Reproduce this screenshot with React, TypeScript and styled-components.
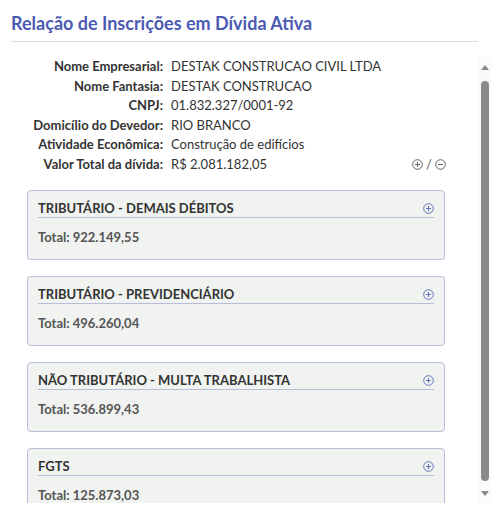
import React, { FC } from "react";
import styled, { createGlobalStyle } from "styled-components";

const GlobalStyle = createGlobalStyle`
  body {
    margin: 0;
    background: #ffffff;
    font-family: "Lato", "Noto Sans", sans-serif;
    color: #333333;
  }
`;

const Page = styled.div`
  padding: 0 0 0 11px;
`;

const Title = styled.h2`
  margin: 0 13px 0 0;
  padding: 12px 0 7px;
  font-size: 18px;
  line-height: 22px;
  font-weight: 700;
  color: #4b5ab3;
  border-bottom: 1px solid #dcdee6;
`;

const Body = styled.div`
  display: flex;
  height: 446px;
  margin-top: 15px;
`;

const ScrollContent = styled.div`
  flex: 1;
  min-width: 0;
  overflow-y: auto;
  scrollbar-width: none;
`;

const ScrollBar = styled.div`
  display: flex;
  flex-direction: column;
  width: 13px;
  background: #fafafa;
`;

interface IArrowProps {
  dir: "up" | "down";
}
const ArrowButton = styled.div<IArrowProps>`
  display: flex;
  align-items: center;
  justify-content: center;
  height: 20px;

  &::before {
    content: "";
    border-left: 4px solid transparent;
    border-right: 4px solid transparent;
    ${({ dir }): string =>
      dir === "up" ? "border-bottom: 5px solid #8a8a8a;" : "border-top: 5px solid #8a8a8a;"}
  }
`;

const Thumb = styled.div`
  flex: 1;
  margin: 4px 2px 2px 3px;
  border-radius: 5px;
  background: #8a8a8a;
`;

const InfoGrid = styled.div`
  display: grid;
  grid-template-columns: 152px 1fr auto;
  column-gap: 8px;
  padding-right: 32px;
  font-size: 13px;
  line-height: 19.5px;
`;

const Label = styled.span`
  text-align: right;
  font-weight: 700;
  color: #333333;
`;

const Value = styled.span`
  color: #333333;
`;

const Toggles = styled.span`
  display: flex;
  align-items: center;
  gap: 3px;
  color: #555555;
`;

const CardList = styled.div`
  display: flex;
  flex-direction: column;
  gap: 16px;
  margin: 16px 33px 16px 16px;
`;

const Card = styled.div`
  padding: 0 10px 13px;
  border: 1px solid #b8bdd9;
  border-radius: 4px;
  background: #f0f3f0;
`;

const CardHeader = styled.div`
  display: flex;
  align-items: center;
  justify-content: space-between;
  padding-top: 8px;
  border-bottom: 1px solid #b8bdd9;
  font-size: 13px;
  line-height: 18px;
  font-weight: 700;
  color: #333333;
`;

const CardTotal = styled.div`
  margin-top: 10px;
  font-size: 13px;
  line-height: 18px;
  font-weight: 700;
  color: #555555;
`;

interface ICircleProps {
  sign: "plus" | "minus";
  color?: string;
}
const CircleIcon: FC<ICircleProps> = ({ sign, color = "#555" }) => (
  <svg width="11" height="11" viewBox="0 0 11 11" fill="none">
    <circle cx="5.5" cy="5.5" r="4.8" stroke={color} strokeWidth="0.9" />
    <path d="M3 5.5h5" stroke={color} strokeWidth="0.9" />
    {sign === "plus" && <path d="M5.5 3v5" stroke={color} strokeWidth="0.9" />}
  </svg>
);

const info: [string, string][] = [
  ["Nome Empresarial:", "DESTAK CONSTRUCAO CIVIL LTDA"],
  ["Nome Fantasia:", "DESTAK CONSTRUCAO"],
  ["CNPJ:", "01.832.327/0001-92"],
  ["Domicílio do Devedor:", "RIO BRANCO"],
  ["Atividade Econômica:", "Construção de edifícios"],
  ["Valor Total da dívida:", "R$ 2.081.182,05"],
];

const debts = [
  { title: "TRIBUTÁRIO - DEMAIS DÉBITOS", total: "922.149,55" },
  { title: "TRIBUTÁRIO - PREVIDENCIÁRIO", total: "496.260,04" },
  { title: "NÃO TRIBUTÁRIO - MULTA TRABALHISTA", total: "536.899,43" },
  { title: "FGTS", total: "125.873,03" },
];

const App: FC = () => (
  <Page>
    <GlobalStyle />
    <Title>Relação de Inscrições em Dívida Ativa</Title>
    <Body>
      <ScrollContent>
        <InfoGrid>
          {info.map(([label, value], i) => (
            <React.Fragment key={label}>
              <Label>{label}</Label>
              <Value>{value}</Value>
              {i === info.length - 1 ? (
                <Toggles>
                  <CircleIcon sign="plus" />/<CircleIcon sign="minus" />
                </Toggles>
              ) : (
                <span />
              )}
            </React.Fragment>
          ))}
        </InfoGrid>
        <CardList>
          {debts.map((d) => (
            <Card key={d.title}>
              <CardHeader>
                {d.title}
                <CircleIcon sign="plus" color="#5867b3" />
              </CardHeader>
              <CardTotal>Total: {d.total}</CardTotal>
            </Card>
          ))}
        </CardList>
      </ScrollContent>
      <ScrollBar>
        <ArrowButton dir="up" />
        <Thumb />
        <ArrowButton dir="down" />
      </ScrollBar>
    </Body>
  </Page>
);

export default App;
